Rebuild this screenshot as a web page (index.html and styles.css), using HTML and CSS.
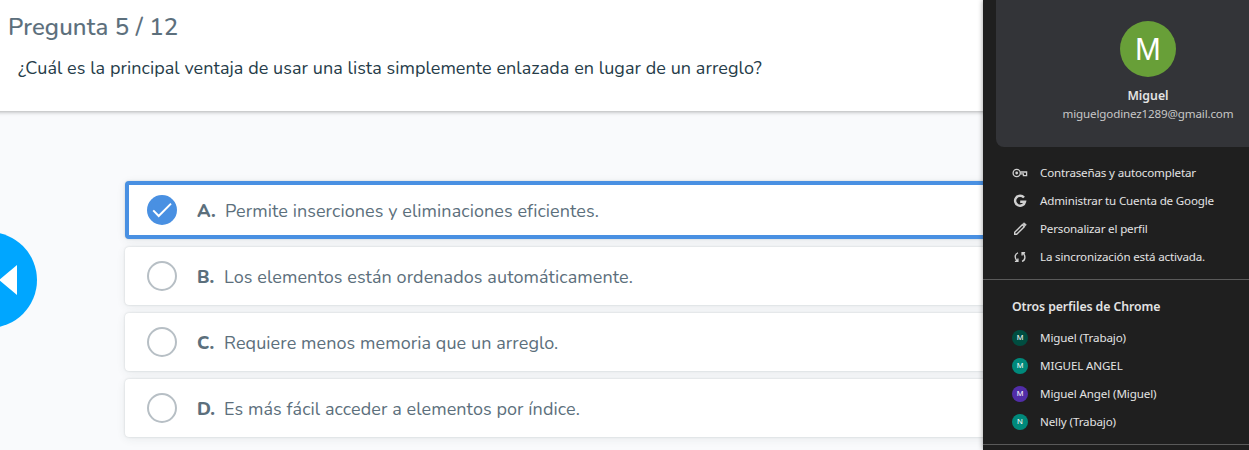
FILE: index.html
```html
<!DOCTYPE html>
<html lang="es">
<head>
<meta charset="utf-8">
<title>Pregunta 5 / 12</title>
<link rel="stylesheet" href="styles.css">
</head>
<body>
<div class="app">
  <main class="quiz">
    <header class="question">
      <h1 class="counter">Pregunta 5 / 12</h1>
      <p class="prompt">¿Cuál es la principal ventaja de usar una lista simplemente enlazada en lugar de un arreglo?</p>
    </header>
    <ul class="options">
      <li class="option selected">
        <svg class="check" viewBox="0 0 30 30"><circle cx="15" cy="15" r="15" fill="#4990e2"/><path d="M6.2 15.4 11.7 21 24 8.6" fill="none" stroke="#fff" stroke-width="2"/></svg>
        <b class="letter">A.</b><span class="answer">Permite inserciones y eliminaciones eficientes.</span>
      </li>
      <li class="option"><i class="radio"></i><b class="letter">B.</b><span class="answer">Los elementos están ordenados automáticamente.</span></li>
      <li class="option"><i class="radio"></i><b class="letter">C.</b><span class="answer">Requiere menos memoria que un arreglo.</span></li>
      <li class="option"><i class="radio"></i><b class="letter">D.</b><span class="answer">Es más fácil acceder a elementos por índice.</span></li>
    </ul>
    <button class="previous" aria-label="Anterior"><svg viewBox="0 0 37 96"><path d="M-1 48 17 33v30z" fill="#fff"/></svg></button>
  </main>
  <aside class="panel">
    <section class="account">
      <div class="avatar">M</div>
      <div class="name">Miguel</div>
      <div class="email">miguelgodinez1289@gmail.com</div>
    </section>
    <ul class="menu">
      <li><svg viewBox="0 0 16 16" fill="none" stroke="#d0d0d0" stroke-width="1.3"><circle cx="4.7" cy="8" r="3.6"/><circle cx="4.7" cy="8" r="1.4" fill="#d0d0d0" stroke="none"/><path d="M8.4 7H14.6v3.6h-3.2V8.8H8.6"/></svg><span>Contraseñas y autocompletar</span></li>
      <li><svg viewBox="0 0 16 16" fill="none" stroke="#d0d0d0" stroke-width="2.4"><path d="M12 4.6A5 5 0 1 0 13 8.7H8.2"/></svg><span>Administrar tu Cuenta de Google</span></li>
      <li><svg viewBox="0 0 16 16" fill="none" stroke="#d0d0d0" stroke-width="1.4"><path d="M2.7 13.3v-2l7.6-7.6 2 2-7.6 7.6z"/><path d="m10.7 3 1.5-1.3 2.1 2.1L13 5.3z" fill="#d0d0d0" stroke-width=".6"/></svg><span>Personalizar el perfil</span></li>
      <li><svg viewBox="0 0 16 16" fill="none" stroke="#d0d0d0" stroke-width="1.4"><path d="M6 3.8C2.6 4.8 2.3 9.4 5.2 12M2.9 12.4h3V9.6M10 12.4c3.5-1 3.8-5.6 1-8.2M13.1 3.8h-3v2.8"/></svg><span>La sincronización está activada.</span></li>
    </ul>
    <section class="profiles">
      <h2>Otros perfiles de Chrome</h2>
      <ul class="menu">
        <li><i class="badge forest">M</i><span>Miguel (Trabajo)</span></li>
        <li><i class="badge teal">M</i><span>MIGUEL ANGEL</span></li>
        <li><i class="badge purple">M</i><span>Miguel Angel (Miguel)</span></li>
        <li><i class="badge teal">N</i><span>Nelly (Trabajo)</span></li>
      </ul>
    </section>
  </aside>
</div>
</body>
</html>
```
FILE: styles.css
```css
* { box-sizing: border-box; }
body { margin: 0; font-family: Nunito, Lato, sans-serif; overflow: hidden; }
ul { list-style: none; margin: 0; padding: 0; }
i { font-style: normal; }
.app { display: flex; width: 1249px; height: 450px; overflow: hidden; }
.quiz { position: relative; flex: none; width: 983px; background: #f9fafc; overflow: hidden; }
.question { height: 111px; margin: 0 -8px; padding: 12px 16px; background: #fff; box-shadow: 0 1px 4px rgba(0,0,0,.3); white-space: nowrap; }
.counter { margin: 0; font-size: 24px; line-height: 30px; font-weight: 500; color: #5c6f7c; letter-spacing: .13px; -webkit-text-stroke: .1px #5c6f7c; }
.prompt { margin: 14px 0 0 10px; font-size: 18px; line-height: 24px; color: #263c49; letter-spacing: .065px; }
.options { display: flex; flex-direction: column; gap: 8px; margin: 70px 0 0 125px; width: 1000px; }
.option { display: flex; align-items: center; height: 58px; padding: 0 22px; border-radius: 4px; background: #fff; box-shadow: 0 0 2px rgba(40,60,70,.22), 0 2px 10px rgba(40,60,70,.08); color: #5c6f7c; font-size: 18px; white-space: nowrap; }
.selected { border: 4px solid #4990e2; padding: 0 18px; }
.check { width: 30px; height: 30px; }
.radio { width: 30px; height: 30px; border: 2px solid #b7bfc5; border-radius: 50%; }
.letter { width: 27px; margin-left: 20px; padding-top: 2px; font-weight: 800; }
.selected .letter { width: 28px; }
.answer { padding-top: 2px; letter-spacing: .08px; }
.previous { position: absolute; left: -59px; top: 232px; width: 96px; height: 96px; padding: 0 0 0 59px; border: 0; border-radius: 50%; background: #00a6ff; }
.previous svg { display: block; width: 37px; height: 96px; }
.panel { flex: none; width: 266px; background: #1f1f1f; color: #e3e3e3; font-family: "Segoe UI", "Noto Sans", sans-serif; font-size: 11.6px; box-shadow: 0 0 5px rgba(0,0,0,.4); z-index: 1; white-space: nowrap; overflow: hidden; }
.account { display: flex; flex-direction: column; align-items: center; width: 304px; height: 155px; margin: -8px 0 0 13px; padding-top: 29px; border-radius: 8px; background: #333438; }
.avatar { width: 56px; height: 56px; border-radius: 50%; background: #689f38; color: #fff; font: 31px/57px "Liberation Sans", sans-serif; text-align: center; }
.name { margin-top: 10px; font-size: 12.3px; line-height: 18px; font-weight: 600; }
.email { line-height: 18px; color: #c7c7c7; letter-spacing: -.15px; }
.menu li { display: flex; align-items: center; height: 28px; padding-left: 29px; letter-spacing: -.17px; }
.menu span { padding-bottom: 2px; }
.profiles .menu li { letter-spacing: -.12px; }
.menu svg, .badge { width: 16px; height: 16px; margin-right: 12px; }
.account + .menu { height: 132px; padding-top: 12px; }
.profiles { border-top: 1px solid #5a5a5a; border-bottom: 1px solid #5a5a5a; height: 166px; }
.profiles h2 { margin: 18px 0 8px 29px; font-size: 12.3px; line-height: 18px; font-weight: 600; letter-spacing: -.08px; }
.badge { border-radius: 50%; color: #fff; font: 8px/16px "Liberation Sans", sans-serif; text-align: center; letter-spacing: 0; }
.forest { background: #004d40; }
.teal { background: #00897b; }
.purple { background: #512da8; }
```
